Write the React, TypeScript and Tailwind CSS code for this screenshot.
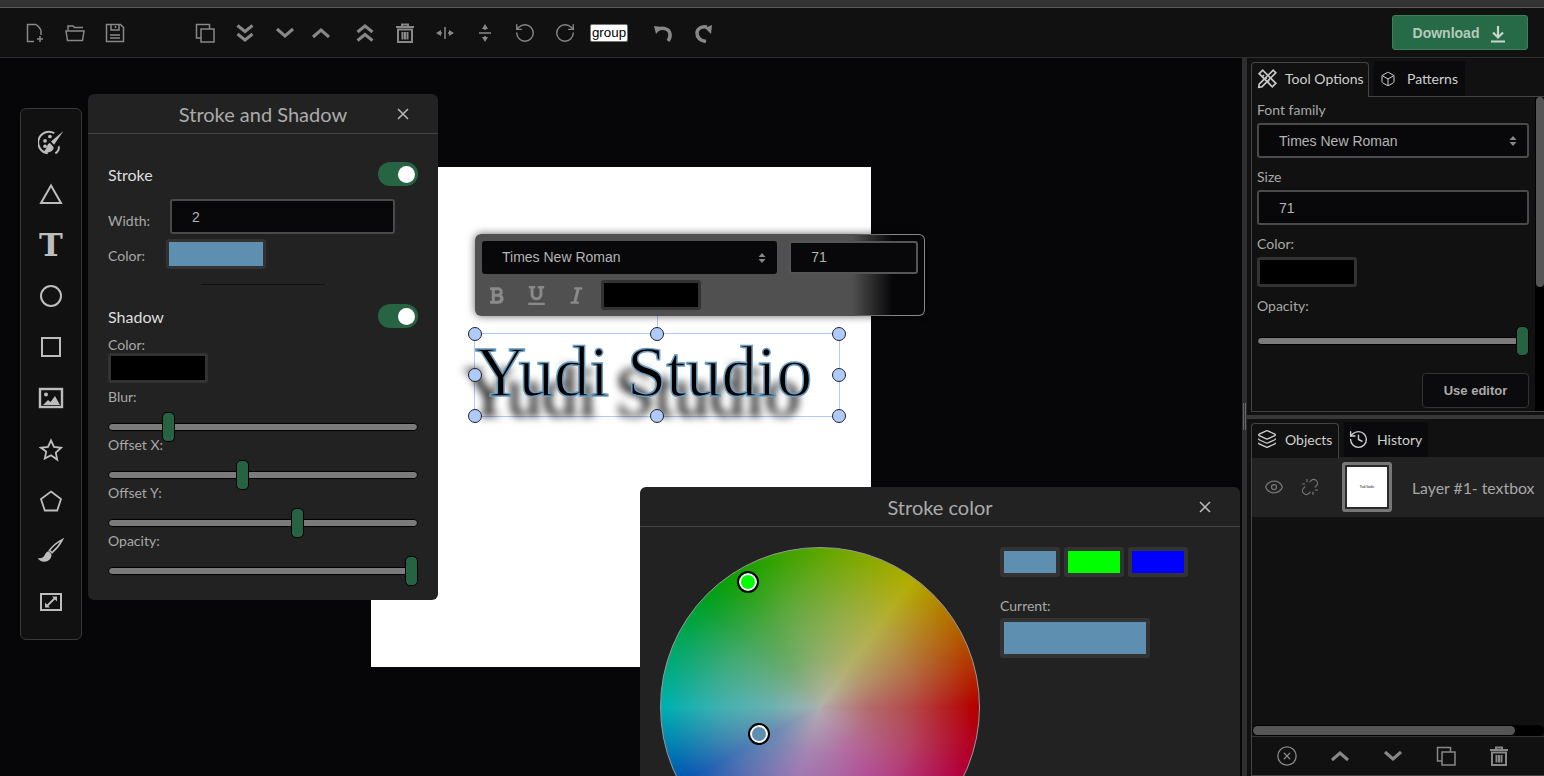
import React from "react";
import { RotateCcw, RotateCw, Box, Layers, History, Eye, Unlink, CircleX } from "lucide-react";
import { FaBold, FaUnderline, FaItalic } from "react-icons/fa";

type P = { className?: string };
const S = ({ children, w = 1.5, className = "" }: { children: React.ReactNode; w?: number; className?: string }) => (
  <svg width="24" height="24" viewBox="0 0 24 24" fill="none" stroke="currentColor" strokeWidth={w} className={className}>
    {children}
  </svg>
);

const NewFile = () => (
  <S>
    <path d="M11 20.500H4.500V3.500h8c1.500 0 5.500 4.500 5.500 6.500v4" />
    <path d="M17 15v6M14 18h6" />
  </S>
);
const Folder = () => (
  <S>
    <path d="M5 9V5h5l1.500 1.500H20" />
    <path d="M3 10h18l-1.500 9.500h-15z" />
  </S>
);
const Save = () => (
  <S>
    <path d="M3.500 3.500h14l3 3v14h-17z" />
    <path d="M8 3.500v5.500h8V3.500M12.500 5v2" />
    <path d="M7 14h10M7 17h10" />
  </S>
);
const Copy = () => (
  <S>
    <path d="M8 17H3.500V3.500h13V8" />
    <rect x="8" y="8" width="13" height="13" />
  </S>
);
const DblDown = () => (
  <S w={3}>
    <path d="M4.500 4.500l7.500 6 7.500-6M4.500 13l7.500 6 7.500-6" />
  </S>
);
const DblUp = () => (
  <S w={3}>
    <path d="M4.500 11l7.500-6 7.500 6M4.500 19.500l7.500-6 7.500 6" />
  </S>
);
const Down = () => (
  <S w={3}>
    <path d="M4 8l8 7 8-7" />
  </S>
);
const Up = () => (
  <S w={3}>
    <path d="M4 16l8-7 8 7" />
  </S>
);
const Trash = () => (
  <S w={2}>
    <path d="M3 6h18M9 5.500V3.500h6v2" />
    <path d="M5 8.500h14V21H5z" />
    <path d="M9.500 11v7.500M12 11v7.500M14.500 11v7.500" />
  </S>
);
const FlipH = ({ className = "" }: P) => (
  <S className={className}>
    <path d="M12 6v12M6 12h3M15 12h3" />
    <path d="M8 9l-5 3 5 3zM16 9l5 3-5 3z" fill="currentColor" stroke="none" />
  </S>
);
const Undo = () => (
  <S w={3.500}>
    <path d="M6 9c5-3 12-2 13 4 .4 2.500-.5 5-2 7" />
    <path d="M3 5l8 1-6 7z" fill="currentColor" stroke="none" />
  </S>
);
const Redo = () => (
  <S w={3.500}>
    <path d="M15 20.500c-6-1-9-4.500-9-8.500s4-7 10-6" />
    <path d="M21 4l-1 9-6-6z" fill="currentColor" stroke="none" />
  </S>
);

const Palette = () => (
  <svg width="26" height="26" viewBox="0 0 24 24" fill="none" stroke="currentColor" strokeWidth="1.800">
    <path d="M15 2.800A10 10 0 1 0 9 21.500" />
    <circle cx="6.500" cy="10" r="1.700" fill="currentColor" stroke="none" />
    <circle cx="11" cy="6" r="1.700" fill="currentColor" stroke="none" />
    <circle cx="6.500" cy="15" r="1.700" fill="currentColor" stroke="none" />
    <path d="M23.500 1L12 10.500l2.800 3z" fill="currentColor" stroke="none" />
    <path d="M11 12c-3 .5-2 5-5.500 7.500 3.500 2.500 8.500 1 9-3.500z" fill="currentColor" stroke="none" />
    <path d="M19 15c1 2-.5 5-3 6.500" />
  </svg>
);
const Triangle = () => (
  <S w={2}>
    <path d="M12 3.500L22 21H2z" />
  </S>
);
const Circle = () => (
  <S w={2}>
    <circle cx="12" cy="12" r="10" />
  </S>
);
const Square = () => (
  <S w={2}>
    <rect x="3" y="3" width="18" height="18" />
  </S>
);
const ImageI = () => (
  <svg width="26" height="24" viewBox="0 0 26 24" fill="none" stroke="currentColor" strokeWidth="2.400">
    <rect x="2" y="3" width="22" height="18" />
    <circle cx="8" cy="8.500" r="2" fill="currentColor" stroke="none" />
    <path d="M5 19l5-5 2.500 2 4.500-6 5 9z" fill="currentColor" stroke="none" />
  </svg>
);
const Star = () => (
  <S w={1.800}>
    <path d="M12 2.500l3 6.500 7 .8-5.200 4.800 1.400 7L12 17.200l-6.200 3.400 1.400-7L2 9.800 9 9z" />
  </S>
);
const Pentagon = () => (
  <S w={1.800}>
    <path d="M12 2.500l10 7.500-3.800 11.500H5.800L2 10z" />
  </S>
);
const Brush = () => (
  <svg width="26" height="26" viewBox="0 0 24 24" fill="none" stroke="currentColor" strokeWidth="1.500">
    <path d="M22.500 1.500c-2 4-6 9-9.500 12l-2.500-2c3-4 8-8 12-10z" />
    <path d="M9.500 13c-2 .5-2.500 3-3.500 4.500-1 1.500-3 2-4.500 2 2 2 6 2.500 8.500 0 1.500-1.500 2-3 1.500-4.500z" fill="currentColor" />
  </svg>
);
const Expand = () => (
  <svg width="24" height="24" viewBox="0 0 24 24" fill="none" stroke="currentColor" strokeWidth="2">
    <rect x="2" y="4" width="20" height="16" />
    <path d="M8 16l8-8" strokeWidth="1.800" />
    <path d="M13 6.500h5v5zM11 17.500H6v-5z" fill="currentColor" stroke="none" />
  </svg>
);
const Tools = () => (
  <svg width="21" height="21" viewBox="0 0 24 24" fill="none" stroke="currentColor" strokeWidth="2">
    <path d="M2.500 6.500l4-4 15 15-4 4z" />
    <path d="M6 10l2-2M9 13l2-2M12 16l2-2" />
    <path d="M21.500 5.500l-3-3L2.500 18.500l-.5 3.500 3.500-.5z" />
  </svg>
);
const Arrows = () => (
  <svg width="8" height="12" viewBox="0 0 8 12" fill="#888">
    <path d="M4 1l3.500 4h-7zM4 11L.5 7h7z" />
  </svg>
);

const liberation = "[font-family:'Liberation_Sans',Arial,sans-serif]";

const Toggle = () => (
  <div className="w-[40px] h-[24px] rounded-full bg-[#276443] flex items-center justify-end pr-[3px]">
    <div className="w-[17px] h-[17px] rounded-full bg-white" />
  </div>
);

const Slider = ({ thumb }: { thumb: string }) => (
  <div className="relative h-[28px] flex items-center">
    <div className="w-full h-[8px] rounded-full bg-[#7b7b7b] border border-black" />
    <div className={`absolute top-[-1px] h-[30px] w-[13px] rounded-[5px] bg-[#266343] border border-black ${thumb}`} />
  </div>
);

const Label = ({ children, className = "" }: { children: React.ReactNode; className?: string }) => (
  <div className={`h-[20px] leading-[20px] text-[14px] text-[#a8a8a8] ${className}`}>{children}</div>
);

const Swatch = ({ cls, size, thick }: { cls: string; size: string; thick?: boolean }) => (
  <div className={`box-border ${thick ? "border-[4px]" : "border-[3px]"} border-[#333] rounded-[3px] ${cls} ${size}`} />
);

const Field = ({ children, className = "" }: { children: React.ReactNode; className?: string }) => (
  <div className={`box-border h-[35px] flex items-center justify-between rounded-[3px] border-2 border-[#4a4a4a] bg-[#08080a] text-[14px] text-[#b4b4b4] pl-[20px] pr-[10px] pt-[1px] ${liberation} ${className}`}>
    {children}
  </div>
);

const Close = () => (
  <svg width="12" height="12" viewBox="0 0 12 12" stroke="#bbb" strokeWidth="1.500" className="absolute right-[29px] top-[14px]">
    <path d="M1 1l10 10M11 1L1 11" />
  </svg>
);

const handles = [
  "left-[-7px] top-[-7px]",
  "left-[175px] top-[-7px]",
  "left-[357px] top-[-7px]",
  "left-[-7px] top-[34px]",
  "left-[357px] top-[34px]",
  "left-[-7px] top-[75px]",
  "left-[175px] top-[75px]",
  "left-[357px] top-[75px]",
];

const Tab = ({ icon, label, active, className = "" }: { icon: React.ReactNode; label: string; active?: boolean; className?: string }) => (
  <div
    className={`h-[35px] flex items-center text-[14px] text-[#cfcfcf] ${
      active
        ? "border border-b-0 border-[#444] rounded-t-[4px] bg-[#111] relative top-[1px] pb-[4px]"
        : "bg-[#0a0a0c]"
    } ${className}`}
  >
    {icon}
    <span>{label}</span>
  </div>
);

export default function App() {
  return (
    <div className="w-[1544px] h-[776px] overflow-hidden flex flex-col bg-[#060608] [font-family:Lato,sans-serif]">
      <div className="h-[8px] shrink-0 bg-[#333] border-b border-[#5a5a5a]" />
      <header className="h-[50px] shrink-0 bg-[#111] border-b border-[#2e2e2e] flex items-center pl-[15px] pr-[16px] text-[#888]">
        {[NewFile, Folder, Save].map((I, i) => (
          <div key={i} className="w-[40px] flex justify-center"><I /></div>
        ))}
        <div className="w-[50px]" />
        <div className="w-[40px] flex justify-center"><Copy /></div>
        <div className="w-[40px] flex justify-center"><DblDown /></div>
        <div className="w-[40px] flex justify-center"><Down /></div>
        <div className="w-[32px] flex justify-center"><Up /></div>
        <div className="w-[40px] ml-[8px] flex justify-center"><DblUp /></div>
        <div className="w-[40px] flex justify-center"><Trash /></div>
        <div className="w-[40px] flex justify-center"><FlipH /></div>
        <div className="w-[40px] flex justify-center"><FlipH className="rotate-90" /></div>
        <div className="w-[40px] flex justify-center"><RotateCcw size={22} strokeWidth={1.5} /></div>
        <div className="w-[40px] flex justify-center"><RotateCw size={22} strokeWidth={1.5} /></div>
        <div className={`ml-[5px] w-[38px] h-[18px] bg-white border border-[#777] rounded-[2px] text-black text-[13.33px] leading-[16px] text-center ${liberation}`}>group</div>
        <div className="w-[15px]" />
        <div className="w-[40px] flex justify-center"><Undo /></div>
        <div className="w-[40px] flex justify-center"><Redo /></div>
        <div className={`ml-auto w-[136px] h-[35px] rounded-[3px] bg-[#266a47] border border-[#3f7f5c] flex items-center justify-center gap-[10px] pt-[2px] text-[14px] font-bold text-[#b5c9bd] ${liberation}`}>
          Download
          <svg width="18" height="18" viewBox="0 0 18 18" fill="none" stroke="#c8d6ce" strokeWidth="2.200">
            <path d="M9 1v11M4 7.500L9 12.500l5-5M2 16.500h14" />
          </svg>
        </div>
      </header>

      <main className="flex flex-1 min-h-0">
        <section className="relative w-[1242px] overflow-hidden bg-[#060608]">
          {/* Canvas page */}
          <div className="absolute left-[371px] top-[109px] w-[500px] h-[500px] bg-white">
            <div className="absolute left-[103px] top-[166px] w-[366px] h-[84px] box-border border border-[#afcaff]">
              <div className="[font-family:'Liberation_Serif',serif] text-[71px] leading-[76px] whitespace-nowrap text-black [-webkit-text-stroke:1.5px_#6a9cc0] [text-shadow:-12px_20px_8px_#000]">
                Yudi Studio
              </div>
              <div className="absolute left-[182px] top-[-24px] w-px h-[24px] bg-[#afcaff]" />
              {handles.map((h) => (
                <div key={h} className={`absolute w-[14px] h-[14px] rounded-full bg-[#afcaff] border border-[#222] ${h}`} />
              ))}
            </div>
          </div>

          {/* Text popup */}
          <div className="absolute left-[475px] top-[176px] w-[450px] h-[82px] box-border rounded-[6px] border border-transparent shadow-[0_0_8px_rgba(0,0,0,0.6)] [background:linear-gradient(90deg,#505050_84%,#060608_93%)_padding-box,linear-gradient(90deg,#505050_84%,#888_93%)_border-box] p-[6px]">
            <div className="flex gap-[12px]">
              <div className={`w-[296px] h-[33px] box-border flex items-center justify-between rounded-[3px] bg-[#08080a] text-[14px] text-[#b4b4b4] pl-[20px] pr-[11px] ${liberation}`}>
                Times New Roman <Arrows />
              </div>
              <div className={`w-[129px] h-[33px] box-border flex items-center rounded-[3px] border-2 border-[#555] bg-[#08080a] text-[14px] text-[#b4b4b4] pl-[20px] ${liberation}`}>71</div>
            </div>
            <div className="flex items-center mt-[6px] text-[#8a8a8a]">
              <div className="w-[28px] flex justify-center"><FaBold size={19} /></div>
              <div className="w-[12px]" />
              <div className="w-[28px] flex justify-center"><FaUnderline size={19} /></div>
              <div className="w-[12px]" />
              <div className="w-[28px] flex justify-center"><FaItalic size={19} /></div>
              <Swatch cls="bg-black ml-[11px]" size="w-[100px] h-[30px]" />
            </div>
          </div>

          {/* Left tool bar */}
          <nav className="absolute left-[20px] top-[50px] w-[62px] h-[532px] box-border rounded-[6px] border border-[#383838] bg-[#111] text-[#bdbdbd] flex flex-col items-center pt-[8px]">
            <div className="h-[51px] flex items-center justify-center"><Palette /></div>
            <div className="h-[51px] flex items-center justify-center"><Triangle /></div>
            <div className="h-[50px] mt-[1px] flex items-center justify-center text-[32px] leading-none font-bold [font-family:'DejaVu_Serif',serif]">T</div>
            <div className="h-[51px] flex items-center justify-center"><Circle /></div>
            <div className="h-[51px] flex items-center justify-center"><Square /></div>
            <div className="h-[51px] flex items-center justify-center"><ImageI /></div>
            <div className="h-[51px] mt-[1px] flex items-center justify-center"><Star /></div>
            <div className="h-[51px] flex items-center justify-center"><Pentagon /></div>
            <div className="h-[51px] -mt-[1px] flex items-center justify-center"><Brush /></div>
            <div className="h-[51px] flex items-center justify-center"><Expand /></div>
          </nav>

          {/* Stroke and Shadow panel */}
          <div className="absolute left-[88px] top-[36px] w-[350px] h-[506px] rounded-[6px] bg-[#222]">
            <div className="relative h-[40px] border-b border-[#444] flex items-center justify-center text-[20px] text-[#ababab]">
              Stroke and Shadow
              <Close />
            </div>
            <div className="px-[20px] pt-[28px]">
              <div className="h-[24px] flex items-center justify-between text-[16px] text-[#dedede]">
                <span className="pt-[2px]">Stroke</span> <Toggle />
              </div>
              <div className="flex items-center mt-[13px]">
                <Label className="w-[62px] mt-[9px]">Width:</Label>
                <Field className="w-[225px]">2</Field>
              </div>
              <div className="flex items-center mt-[5px]">
                <Label className="w-[58px] mt-[4px]">Color:</Label>
                <Swatch cls="bg-[#5f8fb0]" size="w-[100px] h-[30px]" />
              </div>
              <div className="w-[124px] h-px bg-[#111] mx-auto mt-[15px]" />
              <div className="h-[24px] flex items-center justify-between text-[16px] text-[#dedede] mt-[19px]">
                <span className="pt-[2px]">Shadow</span> <Toggle />
              </div>
              <Label className="mt-[7px]">Color:</Label>
              <Swatch cls="bg-black -mt-[2px]" size="w-[100px] h-[30px]" />
              <Label className="mt-[4px]">Blur:</Label>
              <div className="mt-[6px]"><Slider thumb="left-[54px]" /></div>
              <Label className="-mt-[6px]">Offset X:</Label>
              <div className="mt-[6px]"><Slider thumb="left-[128px]" /></div>
              <Label className="-mt-[6px]">Offset Y:</Label>
              <div className="mt-[6px]"><Slider thumb="left-[183px]" /></div>
              <Label className="-mt-[6px]">Opacity:</Label>
              <div className="mt-[6px]"><Slider thumb="left-[297px]" /></div>
            </div>
          </div>

          {/* Stroke color dialog */}
          <div className="absolute left-[640px] top-[429px] w-[600px] h-[320px] rounded-t-[6px] bg-[#222]">
            <div className="relative h-[40px] border-b border-[#444] flex items-center justify-center text-[20px] text-[#ababab]">
              Stroke color
              <Close />
            </div>
            <div className="flex pl-[20px] pt-[20px]">
              <div className="relative w-[320px] h-[320px] shrink-0 rounded-full border border-[#999] box-border [background:radial-gradient(circle_closest-side,rgba(179,179,179,0.95)_0%,rgba(179,179,179,0.6)_30%,rgba(179,179,179,0.38)_60%,rgba(179,179,179,0)_97%),conic-gradient(from_90deg,#b30000,#b30080,#8c40b3_30%,#0050b3_42%,#00b0b0_50%,#00a020_62%,#10a000_66%,#b3ad00_85%,#b36000_92%,#b30000)]">
                <div className="absolute left-[78px] top-[25px] w-[18px] h-[18px] rounded-full bg-[#00ff00] border-2 border-white outline-2 outline-black" />
                <div className="absolute left-[89px] top-[177px] w-[18px] h-[18px] rounded-full bg-[#5f8fb0] border-2 border-white outline-2 outline-black" />
              </div>
              <div className="ml-[20px]">
                <div className="flex gap-[4px]">
                  <Swatch thick cls="bg-[#5f8fb0]" size="w-[60px] h-[30px]" />
                  <Swatch thick cls="bg-[#00ff00]" size="w-[60px] h-[30px]" />
                  <Swatch thick cls="bg-[#0000ff]" size="w-[60px] h-[30px]" />
                </div>
                <Label className="mt-[19px]">Current:</Label>
                <Swatch thick cls="bg-[#5f8fb0] mt-[2px]" size="w-[150px] h-[40px]" />
              </div>
            </div>
          </div>
        </section>

        {/* Right side */}
        <aside className="flex flex-1 bg-[#111] min-w-0">
          <div className="w-[5px] shrink-0 bg-[#2e2e2e] flex flex-col justify-center pb-[346px]">
            <div className="h-[28px] mt-[345px] mx-[1px] border-x border-[#666]" />
          </div>
          <div className="flex-1 flex flex-col min-w-0 pt-[3px]">
            <div className="h-[351px] ml-[4px] flex flex-col shrink-0">
              <div className="flex h-[35px] shrink-0 gap-[5px]">
                <Tab active className="w-[118px] gap-[7px] pl-[5px]" icon={<span className="text-[#c4c4c4]"><Tools /></span>} label="Tool Options" />
                <Tab className="w-[91px] gap-[11px] pl-[6px]" icon={<Box size={16} strokeWidth={1.5} />} label="Patterns" />
              </div>
              <div className="flex-1 flex border-l border-b border-t border-[#444] bg-[#111]">
                <div className="w-[278px] pl-[5px] pr-[1px] shrink-0">
                  <Label className="mt-[3px]">Font family</Label>
                  <Field className="mt-[3px]">Times New Roman <Arrows /></Field>
                  <Label className="mt-[9px]">Size</Label>
                  <Field className="mt-[3px]">71</Field>
                  <Label className="mt-[9px]">Color:</Label>
                  <Swatch cls="bg-black mt-[3px]" size="w-[100px] h-[30px]" />
                  <Label className="mt-[9px]">Opacity:</Label>
                  <div className="mt-[11px]"><Slider thumb="left-[259px]" /></div>
                  <div className={`ml-[165px] mt-[18px] w-[107px] h-[35px] rounded-[4px] border border-[#333] bg-[#0b0b0d] flex items-center justify-center text-[13px] font-bold text-[#aaa] ${liberation}`}>Use editor</div>
                </div>
                <div className="ml-auto w-[9px] bg-black">
                  <div className="h-[190px] w-[8px] ml-[1px] rounded-full bg-[#555]" />
                </div>
              </div>
            </div>
            <div className="h-[4px] mt-[3px] shrink-0 bg-[#383838]" />
            <div className="ml-[4px] mt-[3px] h-[354px] flex flex-col shrink-0">
              <div className="flex h-[35px] shrink-0 gap-[5px]">
                <Tab active className="w-[88px] gap-[8px] pl-[5px]" icon={<Layers size={20} strokeWidth={1.6} />} label="Objects" />
                <Tab className="w-[84px] gap-[8px] pl-[4px]" icon={<History size={21} strokeWidth={1.6} />} label="History" />
              </div>
              <div className="flex-1 flex flex-col border-l border-b border-[#444]">
                <div className="h-[60px] shrink-0 bg-[#222] flex items-center text-[#777]">
                  <div className="w-[44px] flex justify-center"><Eye size={20} strokeWidth={1.5} /></div>
                  <div className="w-[28px] flex justify-center"><Unlink size={18} strokeWidth={1.5} /></div>
                  <div className="ml-[18px] w-[50px] h-[50px] box-border border-[3px] border-[#777] rounded-[3px] bg-[#2a2a2a] p-[2px]">
                    <div className="w-[40px] h-[40px] bg-white flex items-center justify-center text-[3px] text-black [font-family:'Liberation_Serif',serif] whitespace-nowrap">Yudi Studio</div>
                  </div>
                  <div className="ml-[20px] pt-[1px] text-[15.8px] text-[#a8a8a8] whitespace-nowrap">Layer #1- textbox</div>
                </div>
                <div className="flex-1" />
                <div className="h-[11px] shrink-0 bg-black rounded-full px-[1px] py-[1px]">
                  <div className="h-[9px] w-[262px] rounded-full bg-[#555]" />
                </div>
                <div className="h-[39px] shrink-0 border-t border-[#333] flex items-center text-[#888] pl-[11px]">
                  <div className="w-[48px] flex justify-center"><CircleX size={22} strokeWidth={1.4} /></div>
                  <div className="w-[58px] flex justify-center"><Up /></div>
                  <div className="w-[48px] flex justify-center"><Down /></div>
                  <div className="w-[58px] flex justify-center"><Copy /></div>
                  <div className="w-[48px] flex justify-center"><Trash /></div>
                </div>
              </div>
            </div>
          </div>
        </aside>
      </main>
    </div>
  );
}
